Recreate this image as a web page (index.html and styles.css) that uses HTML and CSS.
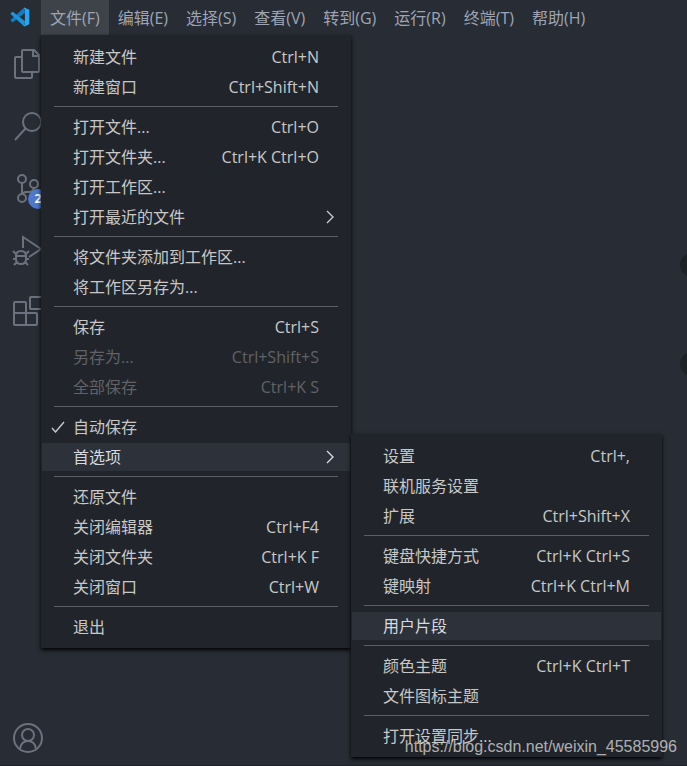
FILE: index.html
```html
<!DOCTYPE html>
<html lang="zh-CN">
<head>
  <meta charset="UTF-8">
  <meta name="viewport" content="width=device-width, initial-scale=1.0">
  <title>Visual Studio Code</title>
  <link rel="stylesheet" href="styles.css">
</head>
<body>

  <!-- Title bar -->
  <header class="titlebar">
    <svg class="logo" viewBox="0 0 20 20" aria-hidden="true">
      <path fill="#0a7fc4" d="M14.3 0.6 L1 12.6 L0.6 13.6 L2.2 15.2 L3.2 15 L15 5.8 Z"/>
      <path fill="#1a94dc" d="M14.3 19.4 L1 7.4 L0.6 6.4 L2.2 4.8 L3.2 5 L15 14.2 Z"/>
      <path fill="#2aa5f0" d="M14.3 0.5 L19.3 2.8 V17.2 L14.3 19.5 L13.8 19 L14.9 17 V3 L13.8 1 Z"/>
    </svg>
    <nav class="menubar">
      <div class="menubar-entry">
        <button class="menubar-button open">文件(F)</button>
        <ul class="menu">
          <li><button class="item">新建文件<kbd>Ctrl+N</kbd></button></li>
          <li><button class="item">新建窗口<kbd>Ctrl+Shift+N</kbd></button></li>
          <li class="separator"></li>
          <li><button class="item">打开文件...<kbd>Ctrl+O</kbd></button></li>
          <li><button class="item">打开文件夹...<kbd>Ctrl+K Ctrl+O</kbd></button></li>
          <li><button class="item">打开工作区...</button></li>
          <li><button class="item">打开最近的文件<svg class="chevron" viewBox="0 0 8 14"><path d="M1 1l6 6-6 6"/></svg></button></li>
          <li class="separator"></li>
          <li><button class="item">将文件夹添加到工作区...</button></li>
          <li><button class="item">将工作区另存为...</button></li>
          <li class="separator"></li>
          <li><button class="item">保存<kbd>Ctrl+S</kbd></button></li>
          <li><button class="item" disabled>另存为...<kbd>Ctrl+Shift+S</kbd></button></li>
          <li><button class="item" disabled>全部保存<kbd>Ctrl+K S</kbd></button></li>
          <li class="separator"></li>
          <li><button class="item"><svg class="check" viewBox="0 0 14 12"><path d="M1 7l3.5 4L13 1"/></svg>自动保存</button></li>
          <li class="has-submenu">
            <button class="item active">首选项<svg class="chevron" viewBox="0 0 8 14"><path d="M1 1l6 6-6 6"/></svg></button>
            <ul class="menu submenu">
              <li><button class="item">设置<kbd>Ctrl+,</kbd></button></li>
              <li><button class="item">联机服务设置</button></li>
              <li><button class="item">扩展<kbd>Ctrl+Shift+X</kbd></button></li>
              <li class="separator"></li>
              <li><button class="item">键盘快捷方式<kbd>Ctrl+K Ctrl+S</kbd></button></li>
              <li><button class="item">键映射<kbd>Ctrl+K Ctrl+M</kbd></button></li>
              <li class="separator"></li>
              <li><button class="item active">用户片段</button></li>
              <li class="separator"></li>
              <li><button class="item">颜色主题<kbd>Ctrl+K Ctrl+T</kbd></button></li>
              <li><button class="item">文件图标主题</button></li>
              <li class="separator"></li>
              <li><button class="item">打开设置同步...</button></li>
            </ul>
          </li>
          <li class="separator"></li>
          <li><button class="item">还原文件</button></li>
          <li><button class="item">关闭编辑器<kbd>Ctrl+F4</kbd></button></li>
          <li><button class="item">关闭文件夹<kbd>Ctrl+K F</kbd></button></li>
          <li><button class="item">关闭窗口<kbd>Ctrl+W</kbd></button></li>
          <li class="separator"></li>
          <li><button class="item">退出</button></li>
        </ul>
      </div>
      <button class="menubar-button">编辑(E)</button>
      <button class="menubar-button">选择(S)</button>
      <button class="menubar-button">查看(V)</button>
      <button class="menubar-button">转到(G)</button>
      <button class="menubar-button">运行(R)</button>
      <button class="menubar-button">终端(T)</button>
      <button class="menubar-button">帮助(H)</button>
    </nav>
  </header>

  <main class="workbench">
    <!-- Activity bar -->
    <aside class="activitybar">
      <button class="activity" aria-label="资源管理器">
        <svg viewBox="0 0 32 32"><path d="M10 8H4q-1 0-1 1v19q0 1 1 1h15q1 0 1-1v-5M11 1h11l5 5v16q0 1-1 1H11q-1 0-1-1V2q0-1 1-1zM21 1v6h6"/></svg>
      </button>
      <button class="activity" aria-label="搜索">
        <svg viewBox="0 0 32 32"><circle cx="20" cy="11" r="9"/><path d="M13.5 17.5L3 29"/></svg>
      </button>
      <button class="activity" aria-label="源代码管理">
        <svg viewBox="0 0 32 32"><circle cx="10" cy="6" r="4"/><circle cx="10" cy="25" r="4"/><circle cx="22" cy="11" r="4"/><path d="M10 10v11M22 15q-1 4-5 4h-3q-3 0-4 3"/></svg>
        <span class="badge">2</span>
      </button>
      <button class="activity" aria-label="运行">
        <svg viewBox="0 0 32 32"><path d="M11 13V2l18 12-12 8M4 21q0-5 5-5t5 5v3q0 5-5 5t-5-5zM4 21h10M1 16l3 3M17 16l-3 3M1 24h3M14 24h3M2 30l3-3M16 30l-3-3"/></svg>
      </button>
      <button class="activity" aria-label="扩展">
        <svg viewBox="0 0 32 32"><path d="M3 5h10q1 0 1 1v10h10q1 0 1 1v10q0 1-1 1H3q-1 0-1-1V6q0-1 1-1zM2 16h12v12M19 0h10q1 0 1 1v10q0 1-1 1H19q-1 0-1-1V1q0-1 1-1z"/></svg>
      </button>
      <button class="activity account" aria-label="帐户">
        <svg viewBox="0 0 32 32"><circle cx="16" cy="16" r="14"/><circle cx="16" cy="13" r="6"/><path d="M8 27q1-8 8-8t8 8"/></svg>
      </button>
    </aside>
    <section class="editor">
      <span class="handle handle-top"></span>
      <span class="handle handle-bottom"></span>
    </section>
  </main>
  <footer class="statusbar"></footer>

  <div class="watermark">https://blog.csdn.net/weixin_45585996</div>

</body>
</html>
```
FILE: styles.css
```css
* {
  box-sizing: border-box;
}

body {
  margin: 0;
  height: 100vh;
  display: flex;
  flex-direction: column;
  overflow: hidden;
  position: relative;
  background: #282c34;
  color: #cccccc;
  font-family: "Open Sans", "Noto Sans CJK SC", sans-serif;
  font-size: 16px;
}

button {
  border: 0;
  margin: 0;
  padding: 0;
  background: none;
  color: inherit;
  font: inherit;
}

/* Title bar */
.titlebar {
  display: flex;
  align-items: center;
  height: 35px;
}

.logo {
  width: 20px;
  height: 20px;
  margin: 0 11px 2px 10px;
}

.menubar {
  display: flex;
  color: #9da5b4;
}

.menubar-entry {
  position: relative;
}

.menubar-button {
  height: 35px;
  padding: 0 9px 2px;
  white-space: nowrap;
}

.menubar-button.open {
  background: #3e4249;
}

/* Menus */
.menu {
  position: absolute;
  top: 100%;
  left: 0;
  z-index: 10;
  width: 310px;
  margin: 0;
  padding: 7px 1px 6px;
  list-style: none;
  background: #21252b;
  color: #c8c8c8;
  box-shadow: 0 2px 4px #000000;
}

.menu li {
  padding: 1px 0;
}

.menu .separator {
  height: 1px;
  margin: 4px 12px 5px;
  padding: 0;
  background: #5c5f63;
}

.submenu {
  top: -8px;
  left: 100%;
  width: 311px;
  margin-left: 1px;
}

.has-submenu {
  position: relative;
}

.item {
  display: flex;
  align-items: center;
  position: relative;
  width: 100%;
  height: 28px;
  padding: 0 31px;
  line-height: 28px;
  text-align: left;
  white-space: nowrap;
}

.item.active {
  background: #2c313a;
  color: #d7dae0;
}

.item:disabled {
  color: #606266;
}

.item kbd {
  margin-left: auto;
  font-family: inherit;
  font-size: 16px;
}

.chevron,
.check {
  position: absolute;
  fill: none;
  stroke: currentColor;
  stroke-width: 1.4;
}

.chevron {
  right: 16px;
  width: 8px;
  height: 14px;
}

.check {
  left: 9px;
  width: 14px;
  height: 12px;
}

/* Activity bar */
.workbench {
  flex: 1;
  display: flex;
  min-height: 0;
}

.activitybar {
  display: flex;
  flex-direction: column;
  width: 62px;
}

.activity {
  position: relative;
  height: 62px;
  padding: 0 0 2px 12px;
  text-align: left;
  color: #6b717d;
}

.activity svg {
  display: block;
  width: 32px;
  height: 32px;
  fill: none;
  stroke: currentColor;
  stroke-width: 2;
  overflow: visible;
}

.account {
  height: 54px;
  margin-top: auto;
  padding-bottom: 0;
}

.badge {
  position: absolute;
  left: 28px;
  top: 30px;
  width: 20px;
  height: 20px;
  border-radius: 10px;
  background: #4d78cc;
  color: #ffffff;
  font-size: 12px;
  font-weight: bold;
  line-height: 20px;
  text-align: center;
}

.editor {
  flex: 1;
  position: relative;
}

.handle {
  position: absolute;
  right: -17px;
  width: 24px;
  height: 24px;
  border-radius: 50%;
  background: #1e2227;
}

.handle-top {
  top: 218px;
}

.handle-bottom {
  top: 317px;
}

.statusbar {
  height: 1px;
  background: #1d2026;
}

.watermark {
  position: absolute;
  right: 10px;
  bottom: 10px;
  z-index: 20;
  color: rgba(255, 255, 255, 0.65);
  font-family: "Liberation Sans", Arial, sans-serif;
  font-size: 16px;
  line-height: 18px;
}
```
